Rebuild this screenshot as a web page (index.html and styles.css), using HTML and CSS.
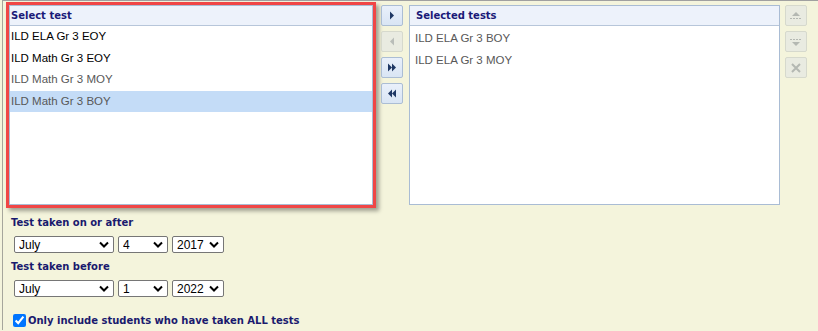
FILE: index.html
```html
<!DOCTYPE html>
<html>
<head>
<meta charset="utf-8">
<link rel="stylesheet" href="styles.css">
</head>
<body>
<div class="panel">
  <div class="lists">
    <div class="highlight">
      <div class="listbox left">
        <div class="lb-head">Select test</div>
        <div class="item dark">ILD ELA Gr 3 EOY</div>
        <div class="item dark">ILD Math Gr 3 EOY</div>
        <div class="item">ILD Math Gr 3 MOY</div>
        <div class="item selected">ILD Math Gr 3 BOY</div>
      </div>
    </div>
    <div class="btns">
      <div class="btn"><svg width="8" height="9" viewBox="0 0 8 9"><path d="M2 0.5 L6 4.5 L2 8.5 Z" fill="#1e3764"/></svg></div>
      <div class="btn off"><svg width="8" height="9" viewBox="0 0 8 9"><path d="M6 0.5 L2 4.5 L6 8.5 Z" fill="#b9bdb9"/></svg></div>
      <div class="btn"><svg width="10" height="9" viewBox="0 0 10 9"><path d="M1 0.5 L5 4.5 L1 8.5 Z M5 0.5 L9 4.5 L5 8.5 Z" fill="#1e3764"/></svg></div>
      <div class="btn"><svg width="10" height="9" viewBox="0 0 10 9"><path d="M5 0.5 L1 4.5 L5 8.5 Z M9 0.5 L5 4.5 L9 8.5 Z" fill="#1e3764"/></svg></div>
    </div>
    <div class="listbox right">
      <div class="lb-head">Selected tests</div>
      <div class="item">ILD ELA Gr 3 BOY</div>
      <div class="item">ILD ELA Gr 3 MOY</div>
    </div>
    <div class="btns side">
      <div class="btn off"><svg width="14" height="12" viewBox="0 0 14 12"><path d="M7 2 L11 6 L3 6 Z" fill="#b4b8b2"/><path d="M1 8.5 H13" stroke="#b4b8b2" stroke-width="1" stroke-dasharray="2 1"/></svg></div>
      <div class="btn off"><svg width="14" height="12" viewBox="0 0 14 12"><path d="M1 3.5 H13" stroke="#b4b8b2" stroke-width="1" stroke-dasharray="2 1"/><path d="M3 6 L11 6 L7 10 Z" fill="#b4b8b2"/></svg></div>
      <div class="btn off"><svg width="12" height="12" viewBox="0 0 12 12"><path d="M2 2 L10 10 M10 2 L2 10" stroke="#b4b8b2" stroke-width="2"/></svg></div>
    </div>
  </div>
  <div class="dates">
    <div class="label">Test taken on or after</div>
    <div class="selrow">
      <span class="sel month"><select><option>July</option></select><svg class="chev" width="10" height="7" viewBox="0 0 10 7"><path d="M1 1.5 L5 5.5 L9 1.5" fill="none" stroke="#000" stroke-width="2"/></svg></span>
      <span class="sel day"><select><option>4</option></select><svg class="chev" width="10" height="7" viewBox="0 0 10 7"><path d="M1 1.5 L5 5.5 L9 1.5" fill="none" stroke="#000" stroke-width="2"/></svg></span>
      <span class="sel year"><select><option>2017</option></select><svg class="chev" width="10" height="7" viewBox="0 0 10 7"><path d="M1 1.5 L5 5.5 L9 1.5" fill="none" stroke="#000" stroke-width="2"/></svg></span>
    </div>
    <div class="label second">Test taken before</div>
    <div class="selrow">
      <span class="sel month"><select><option>July</option></select><svg class="chev" width="10" height="7" viewBox="0 0 10 7"><path d="M1 1.5 L5 5.5 L9 1.5" fill="none" stroke="#000" stroke-width="2"/></svg></span>
      <span class="sel day"><select><option>1</option></select><svg class="chev" width="10" height="7" viewBox="0 0 10 7"><path d="M1 1.5 L5 5.5 L9 1.5" fill="none" stroke="#000" stroke-width="2"/></svg></span>
      <span class="sel year"><select><option>2022</option></select><svg class="chev" width="10" height="7" viewBox="0 0 10 7"><path d="M1 1.5 L5 5.5 L9 1.5" fill="none" stroke="#000" stroke-width="2"/></svg></span>
    </div>
    <label class="check"><input type="checkbox" checked><span>Only include students who have taken ALL tests</span></label>
  </div>
</div>
</body>
</html>
```

FILE: styles.css
```css
html, body {
  margin: 0;
  padding: 0;
  background: #f4f4dc;
}
body {
  width: 818px;
  height: 331px;
  overflow: hidden;
  font-family: "Liberation Sans", Arial, sans-serif;
}
.panel {
  margin-left: 2px;
  border-left: 1px solid #a6a69c;
  border-top: 1px solid #a0a0a0;
  padding: 1px 0 0 3px;
  height: 330px;
  box-sizing: border-box;
}
.lists {
  display: flex;
  align-items: flex-start;
}
.highlight {
  width: 370px;
  height: 206px;
  box-sizing: border-box;
  border: 3px solid #f04646;
  box-shadow: 3px 3px 4px rgba(0, 0, 0, 0.35);
}
.listbox {
  box-sizing: border-box;
  border: 1px solid #a9bcd4;
  background: #fff;
}
.listbox.left {
  width: 364px;
  height: 200px;
}
.listbox.right {
  width: 371px;
  height: 200px;
  margin-left: 6px;
  margin-top: 3px;
}
.lb-head {
  height: 19px;
  line-height: 19px;
  background: #edf2fb;
  border-bottom: 1px solid #b7c6da;
  font-family: "DejaVu Sans", Verdana, sans-serif;
  font-weight: bold;
  font-size: 10px;
  color: #1a1a78;
  padding-left: 1px;
}
.right .lb-head {
  padding-left: 6px;
}
.item {
  height: 21.5px;
  line-height: 21.5px;
  padding-left: 1px;
  font-size: 11.5px;
  color: #585858;
  white-space: nowrap;
}
.right .item {
  padding-left: 5px;
  height: 22px;
  line-height: 24px;
}
.item.dark {
  color: #000;
}
.item.selected {
  background: #c4dcf7;
}
.btns {
  display: flex;
  flex-direction: column;
  gap: 5px;
  margin-left: 5px;
  margin-top: 3px;
}
.btns.side {
  margin-left: 5px;
}
.btn {
  width: 22px;
  height: 21px;
  box-sizing: border-box;
  border: 1px solid #abbdd4;
  border-radius: 2px;
  background: linear-gradient(#e9f0fb, #d9e5f4);
  display: flex;
  align-items: center;
  justify-content: center;
}
.btn.off {
  border-color: #d6d9cd;
  background: #e9ebe1;
}
.dates {
  padding-left: 5px;
}
.label {
  margin-top: 8px;
  height: 14px;
  line-height: 14px;
  font-family: "DejaVu Sans", Verdana, sans-serif;
  font-weight: bold;
  font-size: 10px;
  color: #1a1a6e;
}
.label.second {
  margin-top: 7px;
}
.selrow {
  display: flex;
  gap: 4px;
  margin-top: 6px;
  margin-left: 3px;
}
.sel {
  position: relative;
  display: block;
  height: 17px;
}
.sel select {
  appearance: none;
  -webkit-appearance: none;
  display: block;
  height: 17px;
  box-sizing: border-box;
  border: 1px solid #767676;
  border-radius: 2px;
  background: #fff;
  font-family: "Liberation Sans", Arial, sans-serif;
  font-size: 12px;
  color: #000;
  padding: 0 0 0 4px;
  margin: 0;
}
.sel.month select { width: 100px; }
.sel.day select { width: 50px; }
.sel.year select { width: 52px; }
.chev {
  position: absolute;
  right: 5px;
  top: 5px;
  pointer-events: none;
}
.check {
  display: flex;
  align-items: center;
  margin-top: 17px;
  margin-left: 2px;
  font-family: "DejaVu Sans", Verdana, sans-serif;
  font-weight: bold;
  font-size: 10px;
  color: #1a1a6e;
}
.check input {
  width: 13px;
  height: 13px;
  margin: 0 2px 0 0;
  accent-color: #0075ff;
}
```
